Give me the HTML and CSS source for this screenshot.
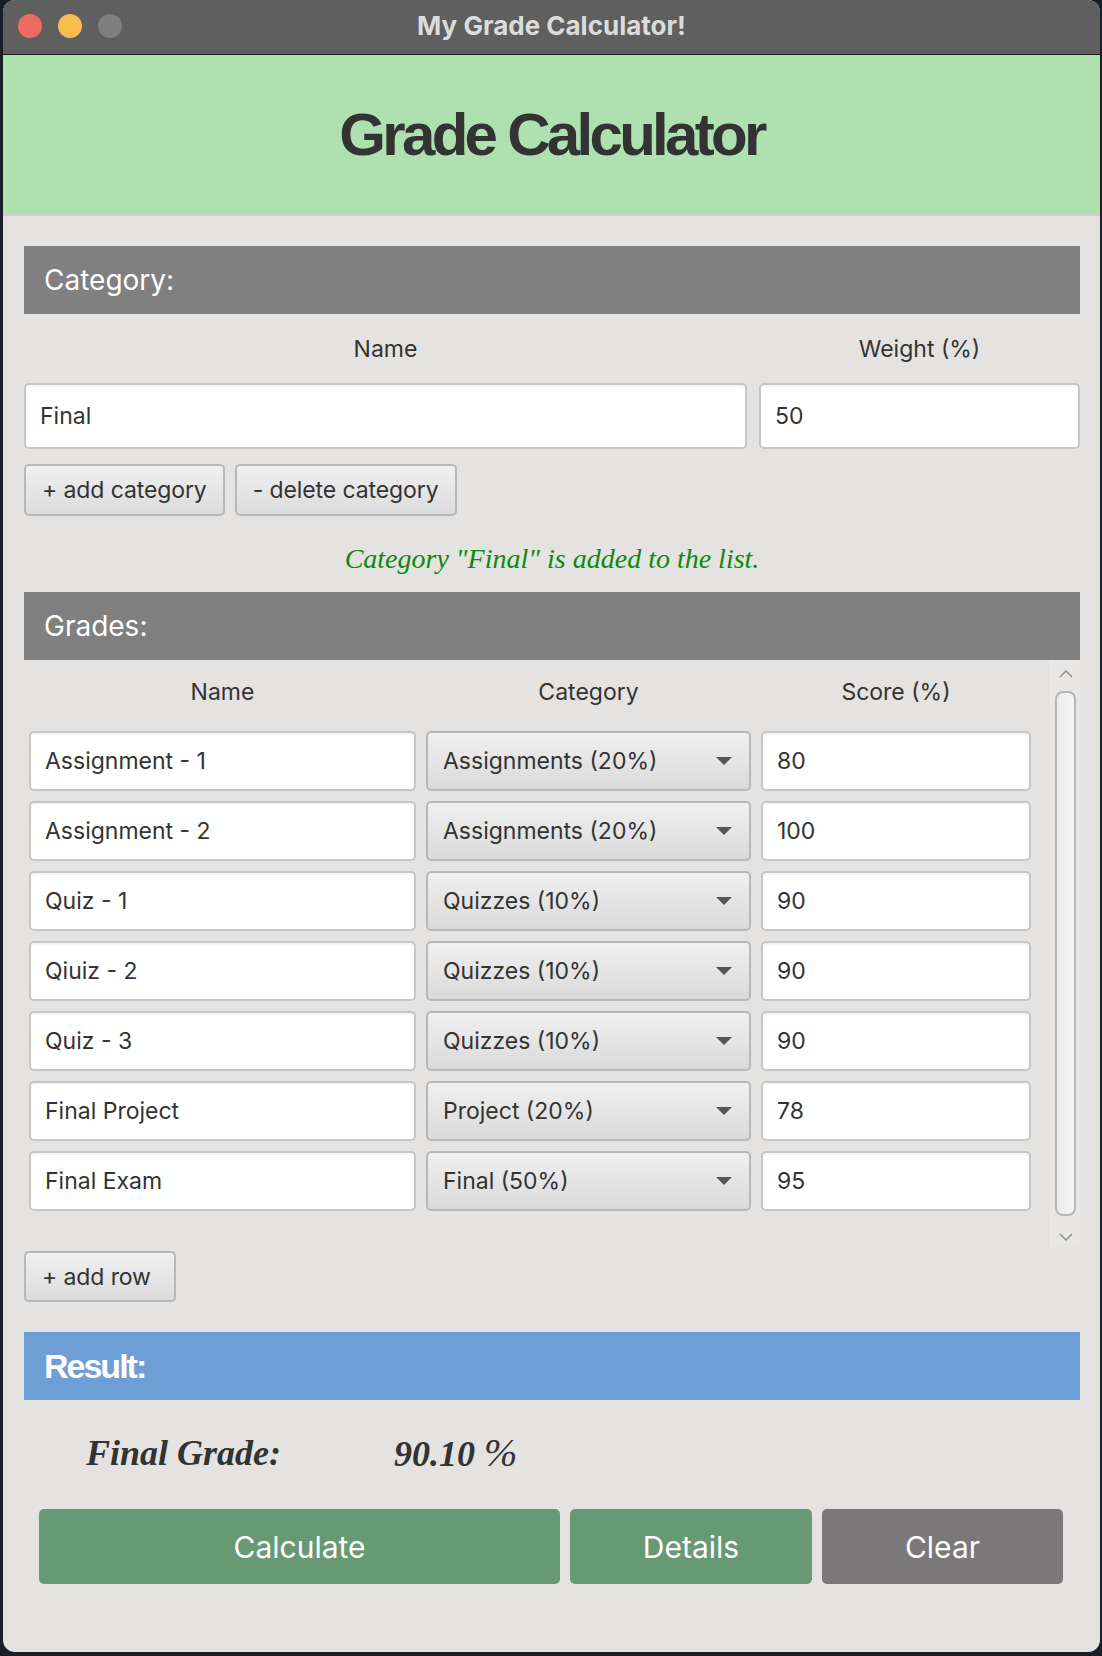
FILE: index.html
```html
<!DOCTYPE html>
<html lang="en">
<head>
<meta charset="utf-8">
<title>My Grade Calculator!</title>
<link rel="stylesheet" href="styles.css">
</head>
<body>
<div class="window">
  <div class="titlebar">
    <div class="lights">
      <span class="light red"></span>
      <span class="light yellow"></span>
      <span class="light gray"></span>
    </div>
    <div class="wtitle">My Grade Calculator!</div>
    <div></div>
  </div>
  <header class="hero"><h1>Grade Calculator</h1></header>

  <main class="content">
    <div class="bar">Category:</div>
    <div class="cat-grid">
      <div class="col-label">Name</div>
      <div class="col-label">Weight (%)</div>
      <div class="field">Final</div>
      <div class="field">50</div>
    </div>
    <div class="btn-row">
      <div class="btn">+ add category</div>
      <div class="btn">- delete category</div>
    </div>
    <div class="message">Category "Final" is added to the list.</div>

    <div class="bar">Grades:</div>
    <div class="scrollpane">
      <div class="grades">
        <div class="col-label">Name</div>
        <div class="col-label">Category</div>
        <div class="col-label">Score (%)</div>

        <div class="field">Assignment - 1</div>
        <div class="combo"><span>Assignments (20%)</span><i class="arrow"></i></div>
        <div class="field">80</div>

        <div class="field">Assignment - 2</div>
        <div class="combo"><span>Assignments (20%)</span><i class="arrow"></i></div>
        <div class="field">100</div>

        <div class="field">Quiz - 1</div>
        <div class="combo"><span>Quizzes (10%)</span><i class="arrow"></i></div>
        <div class="field">90</div>

        <div class="field">Qiuiz - 2</div>
        <div class="combo"><span>Quizzes (10%)</span><i class="arrow"></i></div>
        <div class="field">90</div>

        <div class="field">Quiz - 3</div>
        <div class="combo"><span>Quizzes (10%)</span><i class="arrow"></i></div>
        <div class="field">90</div>

        <div class="field">Final Project</div>
        <div class="combo"><span>Project (20%)</span><i class="arrow"></i></div>
        <div class="field">78</div>

        <div class="field">Final Exam</div>
        <div class="combo"><span>Final (50%)</span><i class="arrow"></i></div>
        <div class="field">95</div>
      </div>
      <div class="vscroll">
        <svg class="chev" width="16" height="10" viewBox="0 0 16 10"><path d="M2 8 L8 2 L14 8" fill="none" stroke="#8a8a8a" stroke-width="1.4"/></svg>
        <div class="thumb"></div>
        <svg class="chev" width="16" height="10" viewBox="0 0 16 10"><path d="M2 2 L8 8 L14 2" fill="none" stroke="#8a8a8a" stroke-width="1.4"/></svg>
      </div>
    </div>
    <div class="btn-row add-row">
      <div class="btn">+ add row</div>
    </div>

    <div class="bar result">Result:</div>
    <div class="final">
      <span class="final-label">Final Grade:</span>
      <span class="final-value">90.10 <span class="pct">%</span></span>
    </div>
    <div class="actions">
      <div class="action calc">Calculate</div>
      <div class="action details">Details</div>
      <div class="action clear">Clear</div>
    </div>
  </main>
</div>
</body>
</html>
```

FILE: styles.css
```css
html, body {
  margin: 0;
  padding: 0;
}
body {
  background: #1a1e28;
  width: 1102px;
  height: 1656px;
  overflow: hidden;
  font-family: "Inter", "Liberation Sans", sans-serif;
  color: #333;
}
.window {
  margin-left: 3px;
  width: 1097px;
  height: 1652px;
  border-radius: 12px;
  overflow: hidden;
  background: #e4e3e1;
  display: flex;
  flex-direction: column;
}
.titlebar {
  height: 54px;
  background: #5e5f5e;
  border-bottom: 1px solid #1c1c1c;
  display: grid;
  grid-template-columns: 1fr auto 1fr;
  align-items: center;
  flex: none;
}
.lights {
  display: flex;
  gap: 16px;
  padding-left: 15px;
  padding-bottom: 2px;
}
.light {
  width: 24px;
  height: 24px;
  border-radius: 50%;
  display: block;
}
.red { background: #ee6a5f; }
.yellow { background: #f5be4f; }
.gray { background: #7f7f7f; }
.wtitle {
  font-weight: 700;
  font-size: 26px;
  color: #dcdcdc;
  padding-bottom: 4px;
}
.hero {
  height: 159px;
  background: #aee1af;
  border-bottom: 2px solid #d2cecd;
  display: flex;
  align-items: center;
  justify-content: center;
  flex: none;
}
.hero h1 {
  margin: 0;
  font-family: "Liberation Sans", Arial, sans-serif;
  font-weight: 700;
  font-size: 60px;
  letter-spacing: -3.7px;
  color: #333;
}
.content {
  padding: 30px 20px 0 21px;
  display: flex;
  flex-direction: column;
}
.bar {
  height: 68px;
  background: #808080;
  color: #fff;
  font-size: 28px;
  display: flex;
  align-items: center;
  padding-left: 20px;
  flex: none;
}
.col-label {
  text-align: center;
  font-size: 23px;
  color: #333;
  display: flex;
  align-items: center;
  justify-content: center;
}
.cat-grid {
  display: grid;
  grid-template-columns: 723px 321px;
  column-gap: 12px;
  grid-template-rows: 69px 66px;
}
.field {
  background: #fff;
  border: 2px solid #c6c6c6;
  border-radius: 5px;
  box-shadow: inset 0 3px 3px -2px rgba(0,0,0,0.08);
  font-size: 23px;
  color: #333;
  display: flex;
  align-items: center;
  padding-left: 14px;
  box-sizing: border-box;
}
.btn-row {
  display: flex;
  gap: 10px;
  margin-top: 15px;
}
.btn {
  height: 52px;
  box-sizing: border-box;
  border: 2px solid #b8b8b8;
  border-radius: 5px;
  background: linear-gradient(#f0f0f0, #dcdcdc);
  font-size: 23px;
  letter-spacing: -0.1px;
  color: #333;
  display: flex;
  align-items: center;
  padding: 0 16px;
}
.message {
  height: 76px;
  box-sizing: border-box;
  padding-top: 10px;
  display: flex;
  align-items: center;
  justify-content: center;
  font-family: "Liberation Serif", "Times New Roman", serif;
  font-style: italic;
  font-size: 28px;
  color: #0b8a0b;
}
.scrollpane {
  display: flex;
  height: 587px;
}
.grades {
  width: 1022px;
  box-sizing: border-box;
  padding-left: 5px;
  display: grid;
  grid-template-columns: 387px 325px 270px;
  column-gap: 10px;
  row-gap: 10px;
  grid-template-rows: 65px repeat(7, 60px);
  align-content: start;
  margin-top: -4px;
}
.grades .col-label { padding-top: 6px; }
.combo {
  box-sizing: border-box;
  border: 2px solid #b8b8b8;
  border-radius: 5px;
  background: linear-gradient(#f0f0f0, #dadada);
  font-size: 23px;
  color: #333;
  display: flex;
  align-items: center;
  justify-content: space-between;
  padding: 0 17px 0 15px;
}
.arrow {
  width: 0;
  height: 0;
  border-left: 8px solid transparent;
  border-right: 8px solid transparent;
  border-top: 8px solid #555;
}
.vscroll {
  width: 30px;
  margin-left: 4px;
  background: #e8e7e6;
  border-left: 1px solid #ecebea;
  display: flex;
  flex-direction: column;
  align-items: center;
  padding: 9px 0 5px;
  box-sizing: border-box;
}
.chev { flex: none; }
.thumb {
  flex: 1;
  width: 17px;
  margin: 12px 0 16px;
  border: 2px solid #b5b5b5;
  border-radius: 8px;
  background: linear-gradient(90deg, #ececec, #f4f4f4);
}
.add-row { margin-top: 4px; }
.add-row .btn { height: 51px; width: 152px; }
.result {
  margin-top: 30px;
  background: #6f9ed6;
  font-family: "Liberation Sans", Arial, sans-serif;
  font-weight: 700;
  font-size: 34px;
  letter-spacing: -2px;
}
.final {
  height: 109px;
  display: flex;
  align-items: center;
  padding-left: 62px;
  padding-bottom: 4px;
  box-sizing: border-box;
  font-family: "Liberation Serif", "Times New Roman", serif;
  font-style: italic;
  font-weight: 700;
  font-size: 36px;
  color: #333;
}
.final-label { width: 308px; }
.pct { font-weight: 400; font-size: 40px; }
.actions {
  display: flex;
  gap: 10px;
  padding: 0 16px 0 15px;
}
.action {
  height: 75px;
  border-radius: 5px;
  color: #fff;
  font-size: 30px;
  display: flex;
  align-items: center;
  justify-content: center;
}
.calc { width: 521px; background: #679a73; }
.details { width: 242px; background: #679a73; }
.clear { width: 241px; background: #7a7879; }
```
